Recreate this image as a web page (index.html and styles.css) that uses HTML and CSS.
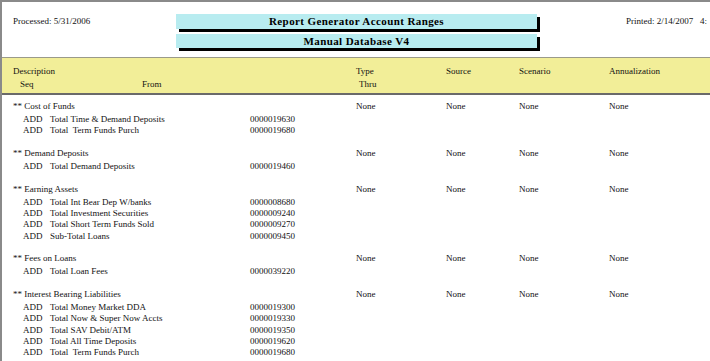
FILE: index.html
```html
<!DOCTYPE html>
<html>
<head>
<meta charset="utf-8">
<link rel="stylesheet" href="styles.css">
</head>
<body>
<div class="page">
  <div class="top">
    <div class="processed">Processed: 5/31/2006</div>
    <div class="titles">
      <div class="title-box">Report Generator Account Ranges</div>
      <div class="title-box">Manual Database V4</div>
    </div>
    <div class="printed">Printed: 2/14/2007&nbsp;&nbsp; 4:</div>
  </div>
  <div class="band">
    <div class="cols">
      <div>Description</div>
      <div>Type</div>
      <div>Source</div>
      <div>Scenario</div>
      <div>Annualization</div>
    </div>
    <div class="cols">
      <div class="sub"><span class="seq">Seq</span><span class="from">From</span></div>
      <div class="thru">Thru</div>
      <div></div><div></div><div></div>
    </div>
  </div>
  <div class="body">
    <div class="group">
      <div class="cols ghead"><div>** Cost of Funds</div><div>None</div><div>None</div><div>None</div><div>None</div></div>
      <div class="row"><span class="op">ADD</span><span class="desc">Total Time &amp; Demand Deposits</span><span class="num">0000019630</span></div>
      <div class="row"><span class="op">ADD</span><span class="desc">Total&nbsp; Term Funds Purch</span><span class="num">0000019680</span></div>
    </div>
    <div class="group">
      <div class="cols ghead"><div>** Demand Deposits</div><div>None</div><div>None</div><div>None</div><div>None</div></div>
      <div class="row"><span class="op">ADD</span><span class="desc">Total Demand Deposits</span><span class="num">0000019460</span></div>
    </div>
    <div class="group">
      <div class="cols ghead"><div>** Earning Assets</div><div>None</div><div>None</div><div>None</div><div>None</div></div>
      <div class="row"><span class="op">ADD</span><span class="desc">Total Int Bear Dep W/banks</span><span class="num">0000008680</span></div>
      <div class="row"><span class="op">ADD</span><span class="desc">Total Investment Securities</span><span class="num">0000009240</span></div>
      <div class="row"><span class="op">ADD</span><span class="desc">Total Short Term Funds Sold</span><span class="num">0000009270</span></div>
      <div class="row"><span class="op">ADD</span><span class="desc">Sub-Total Loans</span><span class="num">0000009450</span></div>
    </div>
    <div class="group">
      <div class="cols ghead"><div>** Fees on Loans</div><div>None</div><div>None</div><div>None</div><div>None</div></div>
      <div class="row"><span class="op">ADD</span><span class="desc">Total Loan Fees</span><span class="num">0000039220</span></div>
    </div>
    <div class="group">
      <div class="cols ghead"><div>** Interest Bearing Liabilities</div><div>None</div><div>None</div><div>None</div><div>None</div></div>
      <div class="row"><span class="op">ADD</span><span class="desc">Total Money Market DDA</span><span class="num">0000019300</span></div>
      <div class="row"><span class="op">ADD</span><span class="desc">Total Now &amp; Super Now Accts</span><span class="num">0000019330</span></div>
      <div class="row"><span class="op">ADD</span><span class="desc">Total SAV Debit/ATM</span><span class="num">0000019350</span></div>
      <div class="row"><span class="op">ADD</span><span class="desc">Total All Time Deposits</span><span class="num">0000019620</span></div>
      <div class="row"><span class="op">ADD</span><span class="desc">Total&nbsp; Term Funds Purch</span><span class="num">0000019680</span></div>
    </div>
  </div>
</div>
</body>
</html>
```
FILE: styles.css
```css
html, body {
  margin: 0;
  padding: 0;
  background: #fff;
  overflow: hidden;
}
body {
  width: 710px;
  height: 361px;
  font-family: "Liberation Serif", "Times New Roman", serif;
  font-size: 9px;
  color: #111;
}
.page {
  border-top: 2px solid #8a8a8a;
  border-left: 2px solid #8a8a8a;
  height: 359px;
  width: 720px;
}
.top {
  display: flex;
  align-items: flex-start;
  height: 55px;
  white-space: nowrap;
}
.processed {
  flex: none;
  width: 163px;
  padding-left: 11px;
  padding-top: 14px;
  line-height: 11px;
}
.titles {
  flex: none;
  display: flex;
  flex-direction: column;
  gap: 5px;
  padding-top: 12px;
  width: 361px;
}
.title-box {
  height: 15px;
  line-height: 15px;
  background: #b8ecf0;
  box-shadow: 3px 3px 0 #000;
  text-align: center;
  font-weight: bold;
  font-size: 11px;
  letter-spacing: 0.4px;
  color: #000;
}
.titles .title-box + .title-box {
  height: 14px;
  line-height: 14px;
}
.printed {
  flex: none;
  margin-left: 89px;
  padding-top: 14px;
  line-height: 11px;
}
.band {
  background: #f2ee98;
  border-top: 1px solid #9a9a8a;
  border-bottom: 2px solid #6a6a6a;
  padding-top: 7px;
  box-sizing: border-box;
  height: 38px;
}
.cols {
  display: grid;
  grid-template-columns: 343px 90px 73px 90px 1fr;
  padding-left: 11px;
  line-height: 13px;
  white-space: nowrap;
}
.sub {
  display: flex;
}
.seq {
  padding-left: 7px;
  width: 122px;
}
.thru {
  padding-left: 3px;
}
.body {
  padding-top: 6px;
}
.group {
  margin-bottom: 11.333px;
}
.ghead {
  line-height: 11px;
  margin-bottom: 2px;
}
.row {
  display: flex;
  height: 11.333px;
  line-height: 11.333px;
  padding-left: 21px;
  white-space: nowrap;
}
.op {
  width: 27px;
}
.desc {
  width: 200px;
}
```
